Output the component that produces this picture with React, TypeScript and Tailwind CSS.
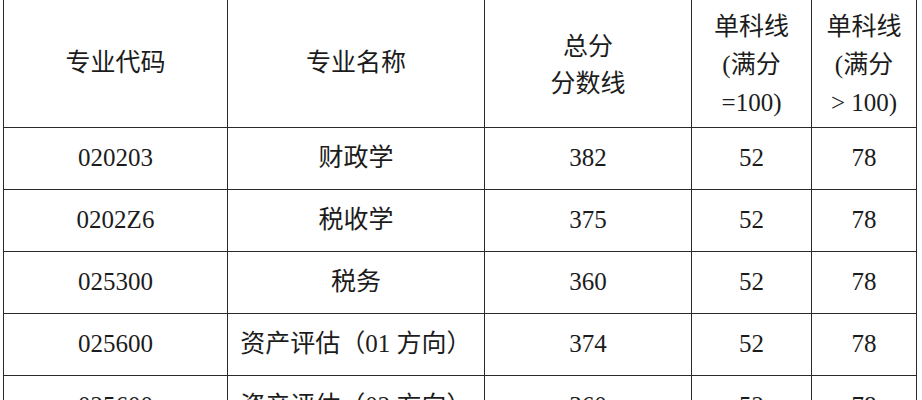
import React from 'react';

const rows = [
  { code: '020203', name: '财政学', total: '382', a: '52', b: '78' },
  { code: '0202Z6', name: '税收学', total: '375', a: '52', b: '78' },
  { code: '025300', name: '税务', total: '360', a: '52', b: '78' },
  { code: '025600', name: '资产评估（01 方向）', total: '374', a: '52', b: '78' },
  { code: '025600', name: '资产评估（02 方向）', total: '360', a: '52', b: '78' },
];

const cell = 'border-[1.5px] border-[#2a2a2a] text-center align-middle p-0';

export default function App() {
  return (
    <div className="w-[922px] h-[400px] overflow-hidden bg-white text-[#1c1c1c] font-['Liberation_Serif','Noto_Sans_CJK_SC',serif] text-[25px]">
      <table className="ml-[3px] w-[913px] border-collapse table-fixed -mt-[2px]">
        <colgroup>
          <col className="w-[224px]" />
          <col className="w-[257px]" />
          <col className="w-[207px]" />
          <col className="w-[120px]" />
          <col className="w-[105px]" />
        </colgroup>
        <thead>
          <tr className="h-[129px]">
            <th className={`${cell} font-normal border-t-0`}>专业代码</th>
            <th className={`${cell} font-normal border-t-0`}>专业名称</th>
            <th className={`${cell} font-normal border-t-0 leading-[37px] pt-[5px]`}>
              总分
              <br />
              分数线
            </th>
            <th className={`${cell} font-normal border-t-0 leading-[38px] pt-[5px]`}>
              单科线
              <br />
              (满分
              <br />
              =100)
            </th>
            <th className={`${cell} font-normal border-t-0 leading-[38px] pt-[5px]`}>
              单科线
              <br />
              (满分
              <br />
              {'> 100)'}
            </th>
          </tr>
        </thead>
        <tbody>
          {rows.map((r, i) => (
            <tr key={i} className="h-[62px]">
              <td className={cell}>{r.code}</td>
              <td className={cell}>{r.name}</td>
              <td className={cell}>{r.total}</td>
              <td className={cell}>{r.a}</td>
              <td className={cell}>{r.b}</td>
            </tr>
          ))}
        </tbody>
      </table>
    </div>
  );
}
